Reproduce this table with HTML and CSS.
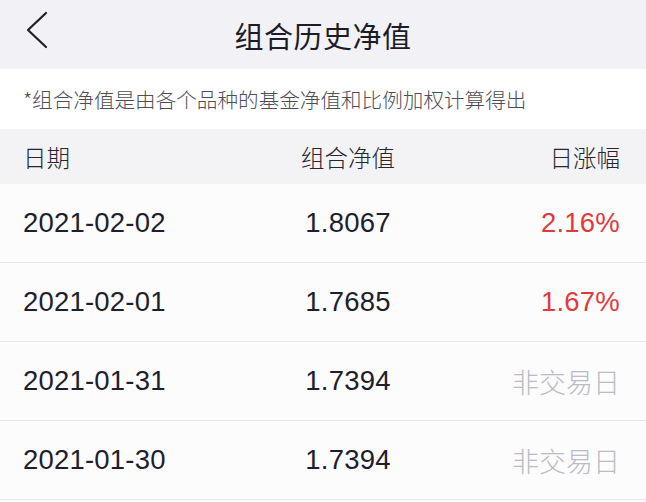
FILE: index.html
```html
<!DOCTYPE html>
<html lang="zh">
<head>
<meta charset="utf-8">
<title>组合历史净值</title>
<link rel="stylesheet" href="styles.css">
</head>
<body>
<div class="page">
  <header class="nav">
    <svg class="back" width="24" height="40" viewBox="0 0 24 40"><polyline points="21,3 3,20 21,37" fill="none" stroke="#1f1f24" stroke-width="2.2" stroke-linecap="round" stroke-linejoin="round"/></svg>
    <h1 class="title">组合历史净值</h1>
  </header>
  <div class="note">*组合净值是由各个品种的基金净值和比例加权计算得出</div>
  <div class="thead row-grid">
    <span>日期</span>
    <span class="mid">组合净值</span>
    <span class="right">日涨幅</span>
  </div>
  <div class="row row-grid">
    <span>2021-02-02</span>
    <span class="mid">1.8067</span>
    <span class="right up">2.16%</span>
  </div>
  <div class="row row-grid">
    <span>2021-02-01</span>
    <span class="mid">1.7685</span>
    <span class="right up">1.67%</span>
  </div>
  <div class="row row-grid">
    <span>2021-01-31</span>
    <span class="mid">1.7394</span>
    <span class="right off">非交易日</span>
  </div>
  <div class="row row-grid">
    <span>2021-01-30</span>
    <span class="mid">1.7394</span>
    <span class="right off">非交易日</span>
  </div>
</div>
</body>
</html>
```
FILE: styles.css
```css
* { box-sizing: border-box; }
html, body { margin: 0; padding: 0; }
body {
  background: #fcfcfd;
  font-family: "Liberation Sans", "Noto Sans CJK SC", sans-serif;
  color: #1e1e2c;
}
.page { width: 646px; height: 502px; overflow: hidden; }
.nav {
  position: relative;
  height: 69px;
  background: #f2f2f6;
  display: flex;
  align-items: center;
  justify-content: center;
}
.back { position: absolute; left: 25px; top: 10px; }
.title {
  margin: 0;
  font-family: "Noto Sans CJK SC", sans-serif;
  font-size: 29px;
  font-weight: 400;
  color: #1c1c28;
  letter-spacing: 0.5px;
}
.note {
  height: 60px;
  background: #ffffff;
  display: flex;
  align-items: center;
  padding-left: 23px;
  font-family: "Noto Sans CJK SC", sans-serif;
  font-size: 20.6px;
  font-weight: 300;
  color: #4e4e56;
}
.row-grid {
  display: grid;
  grid-template-columns: 230px 190px 1fr;
  align-items: center;
  padding: 0 26px 0 23px;
}
.mid { text-align: center; }
.right { text-align: right; }
.thead {
  height: 55px;
  background: #f3f3f6;
  font-family: "Noto Sans CJK SC", sans-serif;
  font-size: 23.5px;
  font-weight: 300;
  color: #26262f;
}
.row {
  height: 79px;
  border-bottom: 1px solid #e6e6ea;
  font-size: 27.5px;
  letter-spacing: 0.2px;
  color: #1e1e2c;
}
.up { color: #e03a3c; }
.off { color: #bbbbc3; font-family: "Noto Sans CJK SC", sans-serif; font-size: 27px; font-weight: 300; letter-spacing: 0; }
```
